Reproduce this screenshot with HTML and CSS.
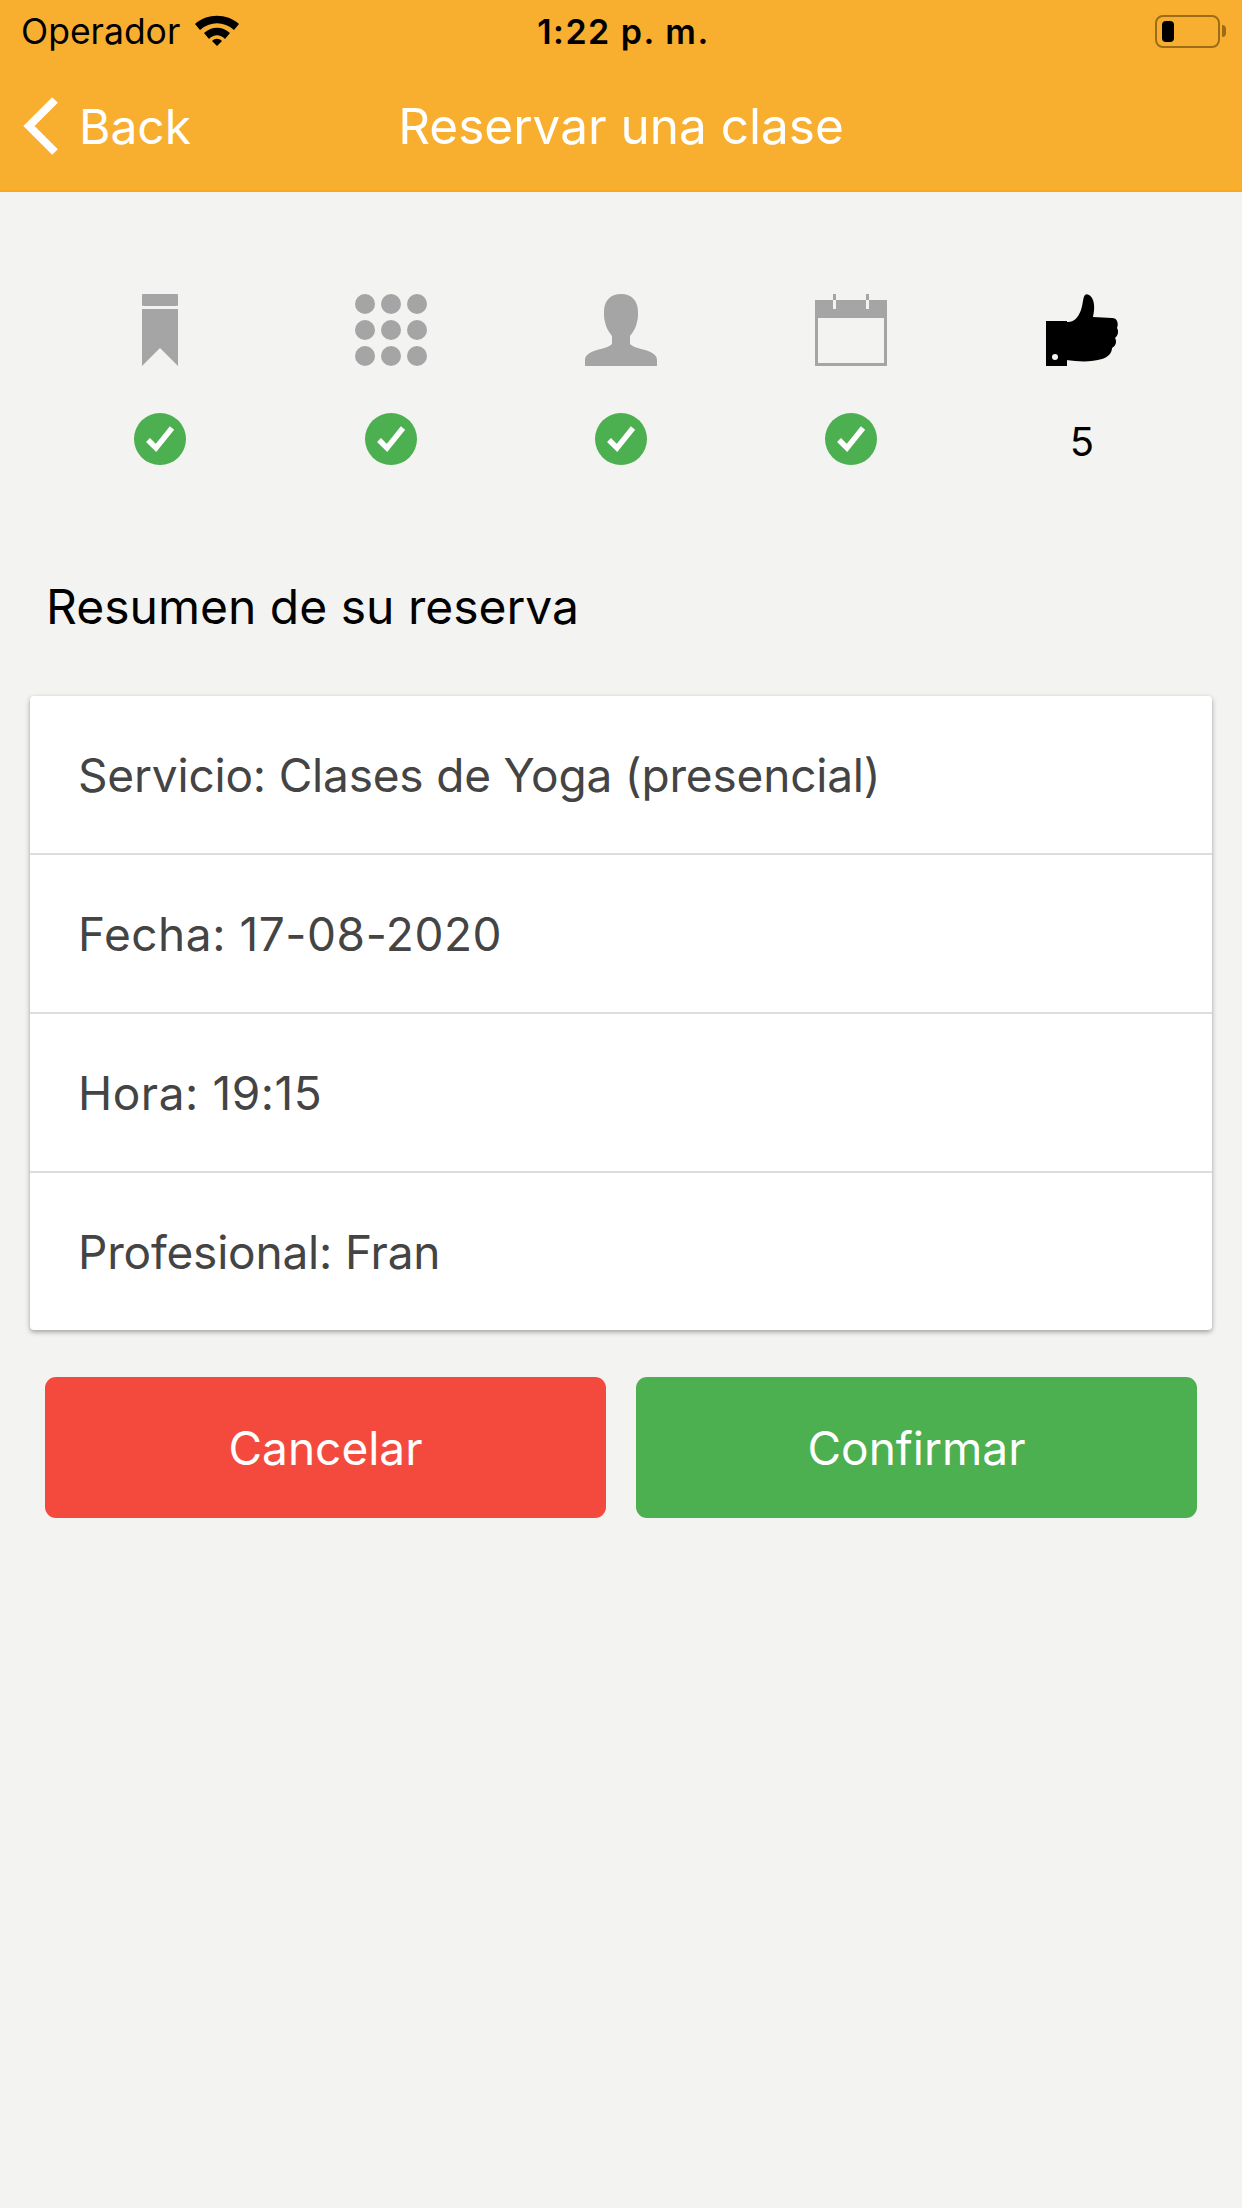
FILE: index.html
```html
<!DOCTYPE html>
<html lang="en">
<head>
    <title>Reservar una clase</title>
    <link rel="stylesheet" href="styles.css">
</head>
<body>
    <div class="header">
        <div class="status-bar">
            <div class="status-left">
                <span>Operador</span>
                <svg class="wifi" width="46" height="34" viewBox="0 0 46 34">
                    <path d="M1 11 C13 0 33 0 45 11 L40 17 C30 8 16 8 6 17 Z"/>
                    <path d="M10 20 C18 13 28 13 36 20 L31 26 C26 21 20 21 15 26 Z"/>
                    <path d="M18 28 C21 25 25 25 28 28 L23 33 Z"/>
                </svg>
            </div>
            <div class="status-time">1:22 p. m.</div>
            <div class="status-right">
                <div class="battery"><div class="battery-level"></div></div>
                <div class="battery-tip"></div>
            </div>
        </div>
        <div class="nav-bar">
            <div class="back">
                <svg width="38" height="60" viewBox="0 0 38 60">
                    <path d="M33 4 L7 30 L33 56" fill="none" stroke="#fff" stroke-width="8"/>
                </svg>
                <span>Back</span>
            </div>
            <div class="nav-title">Reservar una clase</div>
        </div>
    </div>

    <div class="steps">
        <div class="step">
            <svg class="step-icon" viewBox="0 0 72 72">
                <rect x="18" y="0" width="36" height="12" rx="1"/>
                <path d="M18 15 H54 V72 L36 54 L18 72 Z"/>
            </svg>
            <div class="check">
                <svg width="52" height="52" viewBox="0 0 52 52">
                    <path d="M14 27 L22 35 L38 15" fill="none" stroke="#fff" stroke-width="5.5"/>
                </svg>
            </div>
        </div>
        <div class="step">
            <svg class="step-icon" viewBox="0 0 72 72">
                <circle cx="10" cy="10" r="10"/><circle cx="36" cy="10" r="10"/><circle cx="62" cy="10" r="10"/>
                <circle cx="10" cy="36" r="10"/><circle cx="36" cy="36" r="10"/><circle cx="62" cy="36" r="10"/>
                <circle cx="10" cy="62" r="10"/><circle cx="36" cy="62" r="10"/><circle cx="62" cy="62" r="10"/>
            </svg>
            <div class="check">
                <svg width="52" height="52" viewBox="0 0 52 52">
                    <path d="M14 27 L22 35 L38 15" fill="none" stroke="#fff" stroke-width="5.5"/>
                </svg>
            </div>
        </div>
        <div class="step">
            <svg class="step-icon" viewBox="0 0 72 72">
                <path d="M36 0 C47 0 53 7 53 18 C53 22 53 25 52 28 C51 34 48 38 45 42 L45 50 C48 53 53 54 60 56 C67 58 72 61 72 66 L72 72 L0 72 L0 66 C0 61 5 58 12 56 C19 54 24 53 27 50 L27 42 C24 38 21 34 20 28 C19 25 19 22 19 18 C19 7 25 0 36 0 Z"/>
            </svg>
            <div class="check">
                <svg width="52" height="52" viewBox="0 0 52 52">
                    <path d="M14 27 L22 35 L38 15" fill="none" stroke="#fff" stroke-width="5.5"/>
                </svg>
            </div>
        </div>
        <div class="step">
            <svg class="step-icon" viewBox="0 0 72 72">
                <path d="M0 6 H72 V72 H0 Z M3 24 V69 H69 V24 Z" fill-rule="evenodd"/>
                <rect x="18" y="0" width="3" height="6"/>
                <rect x="51" y="0" width="3" height="6"/>
                <rect class="ring" x="18" y="6" width="3" height="9"/>
                <rect class="ring" x="51" y="6" width="3" height="9"/>
            </svg>
            <div class="check">
                <svg width="52" height="52" viewBox="0 0 52 52">
                    <path d="M14 27 L22 35 L38 15" fill="none" stroke="#fff" stroke-width="5.5"/>
                </svg>
            </div>
        </div>
        <div class="step step-active">
            <svg class="step-icon" viewBox="0 0 72 72">
                <path d="M0 27 H21 V72 H0 Z"/>
                <path d="M20 28 H22 C28 28 32 24 35 16 C37 10 37 3 39 1 C41 -1 45 1 47 6 C49 12 48 18 47 23 L66 24 C71 24 73 29 71 34 C73 37 72 42 69 44 C71 47 70 52 66 54 C66 59 62 63 56 65 C46 68 34 68 20 66 Z"/>
                <circle class="hole" cx="9" cy="63" r="3"/>
            </svg>
            <div class="step-number">5</div>
        </div>
    </div>

    <h1 class="summary-title">Resumen de su reserva</h1>

    <div class="summary-card">
        <div class="summary-row">Servicio: Clases de Yoga (presencial)</div>
        <div class="summary-row summary-row-digits">Fecha: 17-08-2020</div>
        <div class="summary-row summary-row-digits">Hora: 19:15</div>
        <div class="summary-row">Profesional: Fran</div>
    </div>

    <div class="buttons">
        <button class="btn btn-cancel">Cancelar</button>
        <button class="btn btn-confirm">Confirmar</button>
    </div>
</body>
</html>
```

FILE: styles.css
```css
/* CSS styles */

body {
    font-family: Inter, Roboto, "Liberation Sans", sans-serif;
    background-color: #f3f3f2;
    margin: 0;
    padding: 0;
    width: 1242px;
    height: 2208px;
    overflow: hidden;
}

.header {
    background-color: #f8af2f;
    border-bottom: 2px solid #f8a81e;
    height: 190px;
}

.status-bar {
    display: grid;
    grid-template-columns: 1fr auto 1fr;
    align-items: center;
    height: 62px;
    padding: 0 16px 0 21px;
    color: #000;
}

.status-left {
    display: flex;
    align-items: center;
    gap: 14px;
    font-size: 35.5px;
}

.wifi {
    fill: #000;
    margin-top: -2px;
}

.status-time {
    font-size: 34px;
    font-weight: 600;
    letter-spacing: 1.5px;
}

.status-right {
    display: flex;
    align-items: center;
    justify-content: flex-end;
    gap: 2px;
}

.battery {
    box-sizing: border-box;
    width: 65px;
    height: 33px;
    border: 2px solid #9c6c19;
    border-radius: 8px;
    padding: 4px 5px;
}

.battery-level {
    width: 12px;
    height: 21px;
    background-color: #000;
    border-radius: 4px;
}

.battery-tip {
    width: 4px;
    height: 12px;
    background-color: #9c6c19;
    border-radius: 0 4px 4px 0;
}

.nav-bar {
    display: grid;
    grid-template-columns: 1fr auto 1fr;
    align-items: center;
    height: 128px;
    padding: 0 21px;
    color: #fff;
}

.back {
    display: flex;
    align-items: center;
    gap: 19px;
    padding-left: 1px;
    font-size: 48px;
}

.nav-title {
    font-size: 49.5px;
}

.steps {
    display: flex;
    padding: 102px 45px 0;
}

.step {
    flex: 1;
    display: flex;
    flex-direction: column;
    align-items: center;
    gap: 47px;
}

.step-icon {
    display: block;
    width: 72px;
    height: 72px;
    fill: #a5a5a5;
    overflow: visible;
}

.ring {
    fill: #f3f3f2;
}

.step-active .step-icon {
    fill: #000;
}

.hole {
    fill: #f3f3f2;
}

.check {
    width: 52px;
    height: 52px;
    border-radius: 50%;
    background-color: #4caf50;
}

.check svg {
    display: block;
}

.step-number {
    height: 52px;
    line-height: 58px;
    font-size: 40px;
    color: #000;
}

.summary-title {
    margin: 0;
    padding: 113px 46px 0;
    font-size: 48px;
    line-height: 58px;
    font-weight: 400;
    color: #000;
}

.summary-card {
    margin: 60px 30px 0;
    background-color: #fff;
    border-radius: 4px;
    box-shadow: 0 2px 5px rgba(0, 0, 0, 0.35);
}

.summary-row {
    display: flex;
    align-items: center;
    box-sizing: border-box;
    height: 159px;
    padding: 0 48px;
    font-size: 46px;
    letter-spacing: -0.19px;
    color: #444;
    border-bottom: 2px solid #ddd;
}

.summary-row-digits {
    letter-spacing: 0.55px;
}

.summary-row:last-child {
    border-bottom: none;
    height: 157px;
}

.buttons {
    display: flex;
    gap: 30px;
    padding: 47px 45px 0;
}

.btn {
    flex: 1;
    height: 141px;
    border: none;
    border-radius: 11px;
    font-family: inherit;
    font-size: 46px;
    color: #fff;
    cursor: pointer;
}

.btn-cancel {
    background-color: #f44a3d;
}

.btn-confirm {
    background-color: #4caf50;
}
```
